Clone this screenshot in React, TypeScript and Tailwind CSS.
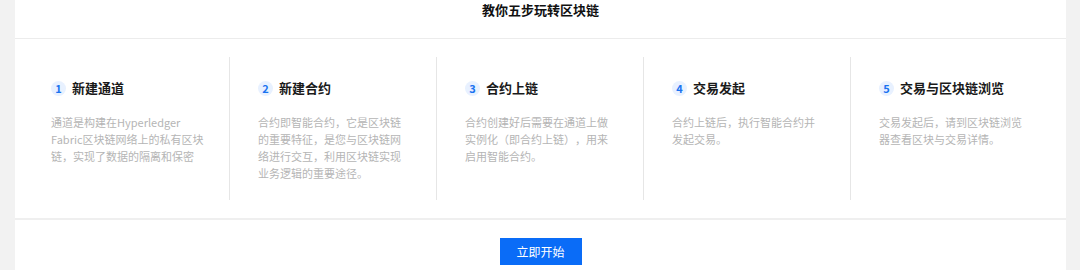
const steps = [
  {
    n: 1,
    title: '新建通道',
    desc: '通道是构建在Hyperledger Fabric区块链网络上的私有区块链，实现了数据的隔离和保密',
    width: 'w-[158px]',
  },
  {
    n: 2,
    title: '新建合约',
    desc: '合约即智能合约，它是区块链的重要特征，是您与区块链网络进行交互，利用区块链实现业务逻辑的重要途径。',
    width: 'w-[150px]',
  },
  {
    n: 3,
    title: '合约上链',
    desc: '合约创建好后需要在通道上做实例化（即合约上链），用来启用智能合约。',
    width: 'w-[150px]',
  },
  {
    n: 4,
    title: '交易发起',
    desc: '合约上链后，执行智能合约并发起交易。',
    width: 'w-[150px]',
  },
  {
    n: 5,
    title: '交易与区块链浏览',
    desc: '交易发起后，请到区块链浏览器查看区块与交易详情。',
    width: 'w-[150px]',
  },
];

export default function App() {
  return (
    <div
      className="w-[1080px] h-[270px] bg-[#f2f2f2] overflow-hidden"
      style={{ fontFamily: '"Noto Sans CJK SC", "Liberation Sans", sans-serif' }}
    >
      <div className="ml-[15px] w-[1051px] h-full bg-white">
        <div className="h-[39px] border-b border-[#ececec] text-center">
          <h1 className="text-[13px] leading-[20px] font-bold text-[#111]">教你五步玩转区块链</h1>
        </div>

        <div className="grid grid-cols-5 px-[8px] py-[18px] border-b-2 border-[#efefef]">
          {steps.map((s, i) => (
            <div
              key={s.n}
              className={
                'h-[143px] pl-[28px] pt-[21px] ' + (i < 4 ? 'border-r border-[#e6e6e6]' : '')
              }
            >
              <div className="flex items-center gap-[6px] h-[20px]">
                <span className="w-[15px] h-[15px] rounded-full bg-[#e8f1ff] text-[#1a73f0] text-[11px] leading-none font-semibold flex items-center justify-center">
                  {s.n}
                </span>
                <span className="text-[13px] font-bold text-[#1a1a1a]">{s.title}</span>
              </div>
              <p
                className={
                  'mt-[16px] text-[11px] leading-[17px] text-[#b5b5b5] [text-spacing-trim:space-all] ' +
                  s.width
                }
              >
                {s.desc}
              </p>
            </div>
          ))}
        </div>

        <div className="flex justify-center pt-[18px]">
          <button className="w-[82px] h-[27px] bg-[#0a6cf7] text-white text-[12px]">立即开始</button>
        </div>
      </div>
    </div>
  );
}
